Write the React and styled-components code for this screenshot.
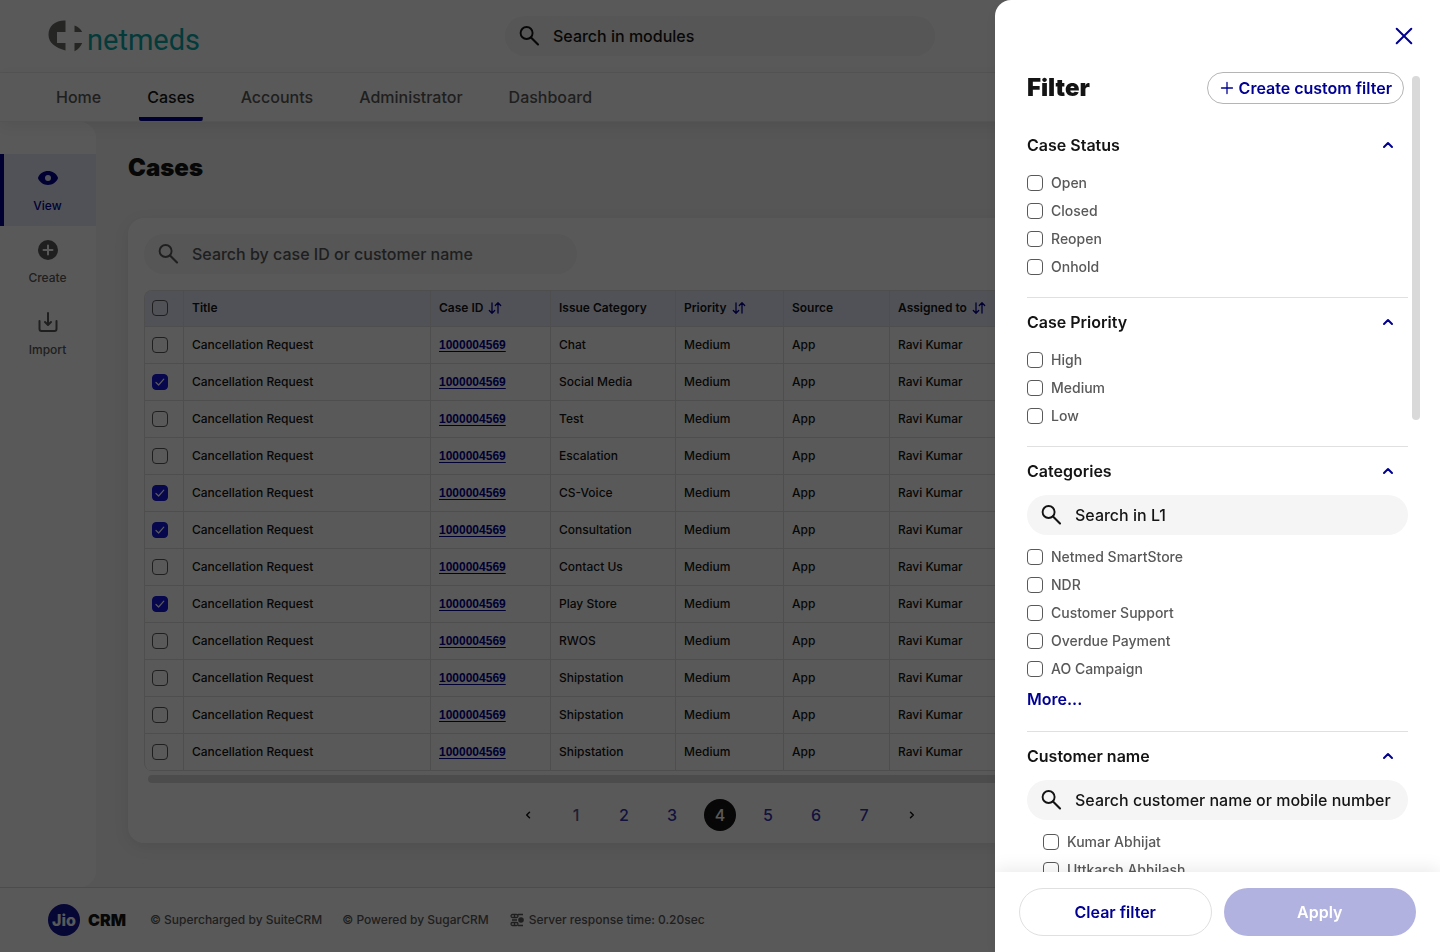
import React, { useState } from 'react';
import styled, { createGlobalStyle } from 'styled-components';

const GlobalStyle = createGlobalStyle`
  * {
    box-sizing: border-box;
  }

  body {
    margin: 0;
    font-family: 'Inter', 'Liberation Sans', sans-serif;
    font-weight: 500;
    color: #141414;
    background-color: #f5f5f5;
  }

  button,
  input {
    font: inherit;
    color: inherit;
  }

  button {
    padding: 0;
    border: none;
    background: none;
    cursor: pointer;
  }

  svg {
    display: block;
    flex: none;
  }
`;

/* ---------- page ---------- */

const Page = styled.div`
  min-height: 100vh;
  display: flex;
  flex-direction: column;
`;

const Header = styled.header`
  display: grid;
  grid-template-columns: 1fr minmax(0, 430px) 1fr;
  align-items: center;
  padding: 16px 48px;
  background-color: #ffffff;
  border-bottom: 1px solid #f0f0f0;
`;

const Brand = styled.a`
  display: flex;
  align-items: center;
  gap: 4px;
  color: #0ba8aa;
  text-decoration: none;
`;

const BrandName = styled.span`
  padding-top: 8px;
  font-family: 'Roboto', sans-serif;
  font-size: 29px;
  font-weight: 400;
  line-height: 32px;
`;

const SearchBox = styled.label`
  width: ${({ $width }) => $width || '100%'};
  max-width: 100%;
  height: 40px;
  display: flex;
  align-items: center;
  gap: 12px;
  padding: 0 12px;
  border-radius: 20px;
  background-color: #f5f5f5;
  color: ${({ $muted }) => ($muted ? '#595959' : '#141414')};

  input {
    flex: 1;
    min-width: 0;
    padding: 0;
    border: none;
    outline: none;
    background: none;
    font-size: 16px;
    line-height: 24px;
  }

  input::placeholder {
    color: inherit;
    opacity: 1;
  }
`;

const Nav = styled.nav`
  position: relative;
  display: flex;
  gap: 30px;
  padding: 0 48px;
  background-color: #ffffff;
  border-bottom: 1px solid #f0f0f0;
  box-shadow: 0 4px 16px rgba(0, 0, 0, 0.08);
`;

const NavItem = styled.a`
  padding: 12px 8px;
  font-size: 16px;
  line-height: 24px;
  color: #595959;
  text-decoration: none;

  &[aria-current] {
    color: #141414;
    background: linear-gradient(#000093, #000093) bottom / 100% 4px no-repeat;
    border-radius: 2px;
  }
`;

const Columns = styled.div`
  flex: 1;
  display: flex;
`;

const Sidebar = styled.aside`
  width: 96px;
  flex: none;
  padding-top: 32px;
  background-color: #ffffff;
  border-radius: 0 16px 16px 0;
`;

const SideItem = styled.a`
  display: flex;
  flex-direction: column;
  align-items: center;
  gap: 8px;
  padding: 12px 5px 12px 0;
  border-left: 4px solid ${({ $active }) => ($active ? '#000093' : 'transparent')};
  background-color: ${({ $active }) => ($active ? '#e8ebfa' : 'transparent')};
  color: ${({ $active }) => ($active ? '#000093' : '#595959')};
  font-size: 12px;
  line-height: 16px;
  text-decoration: none;
`;

const Main = styled.main`
  flex: 1;
  min-width: 0;
  display: flex;
  flex-direction: column;
  gap: 34px;
  padding: 30px 128px 44px 32px;
`;

const Title = styled.h1`
  margin: 0;
  font-size: 24px;
  line-height: 32px;
  font-weight: 900;
`;

const Card = styled.section`
  display: flex;
  flex-direction: column;
  padding: 16px 16px 12px;
  border-radius: 16px;
  background-color: #ffffff;
  box-shadow: 0 4px 16px rgba(0, 0, 0, 0.08);
`;

const Table = styled.table`
  width: 100%;
  margin-top: 16px;
  table-layout: fixed;
  border-collapse: separate;
  border-spacing: 0;
  border: 1px solid #e0e0e0;
  border-bottom: none;
  border-radius: 8px;
  font-size: 12px;
  line-height: 16px;
  overflow: hidden;

  th,
  td {
    height: 37px;
    padding: 0 8px;
    text-align: left;
    border-bottom: 1px solid #e0e0e0;
    border-right: 1px solid #e0e0e0;
    white-space: nowrap;
  }

  th {
    height: 36px;
    padding-bottom: 2px;
    font-weight: 600;
    background-color: #e8ebfa;
  }

  th:first-child,
  td:first-child {
    padding-left: 7px;
  }

  th:last-child,
  td:last-child {
    border-right: none;
  }

  td a {
    color: #000093;
    font-family: 'Liberation Sans', sans-serif;
    font-weight: 700;
    text-underline-offset: 2px;
  }
`;

const Col = styled.col`
  width: ${({ $width }) => $width};
`;

const SortLabel = styled.button`
  display: flex;
  align-items: center;
  gap: 4px;

  svg {
    color: #000093;
  }
`;

const Check = styled.input.attrs({ type: 'checkbox' })`
  appearance: none;
  display: block;
  flex: none;
  width: 16px;
  height: 16px;
  margin: 0;
  border: 1px solid #595959;
  border-radius: 4px;
  background-color: #ffffff;

  th & {
    background-color: transparent;
  }

  &:checked {
    border-color: #1414dc;
    background: #1414dc
      url("data:image/svg+xml,%3Csvg xmlns='http://www.w3.org/2000/svg' viewBox='0 0 14 14' fill='none' stroke='white' stroke-width='1.2' stroke-linecap='round' stroke-linejoin='round'%3E%3Cpath d='M3 7.5l2.600 2.500 5.200-5.800'/%3E%3C/svg%3E")
      center / 14px no-repeat;
  }
`;

const ScrollTrack = styled.div`
  height: 8px;
  margin: 4px 4px 0;
  border-radius: 4px;
  background-color: #dadada;
`;

const Pagination = styled.nav`
  display: flex;
  justify-content: center;
  gap: 16px;
  margin-top: 16px;
`;

const PageButton = styled.button`
  width: 32px;
  height: 32px;
  display: flex;
  align-items: center;
  justify-content: center;
  border-radius: 50%;
  font-size: 16px;
  color: ${({ $tone }) => $tone || '#3535b0'};

  &[aria-current] {
    color: #ffffff;
    background-color: #141414;
  }
`;

const Footer = styled.footer`
  display: flex;
  align-items: center;
  gap: 20px;
  padding: 16px 48px;
  border-top: 1px solid #d9d9d9;
  background-color: #ffffff;
  color: #595959;
  font-size: 12px;
  line-height: 16px;
`;

const FooterBrand = styled.div`
  display: flex;
  align-items: center;
  gap: 8px;
  margin-right: 4px;
  color: #141414;
  font-size: 16px;
  font-weight: 900;
`;

const JioBadge = styled.span`
  width: 32px;
  height: 32px;
  display: flex;
  align-items: center;
  justify-content: center;
  border-radius: 50%;
  background-color: #14149b;
  color: #ffffff;
  font-weight: 800;
`;

const FooterNote = styled.span`
  display: flex;
  align-items: center;
  gap: 4px;
`;

/* ---------- filter drawer ---------- */

const Overlay = styled.div`
  position: fixed;
  inset: 0;
  display: flex;
  justify-content: flex-end;
  background-color: rgba(0, 0, 0, 0.65);
`;

const Drawer = styled.aside`
  width: 445px;
  max-width: 100%;
  display: flex;
  flex-direction: column;
  overflow: hidden;
  border-radius: 16px 0 0 0;
  background-color: #ffffff;
  box-shadow: 0 4px 16px rgba(0, 0, 0, 0.08);
`;

const DrawerTop = styled.div`
  display: flex;
  justify-content: flex-end;
  padding: 24px;
  color: #000093;
`;

const DrawerBody = styled.div`
  flex: 1;
  min-height: 0;
  display: flex;
  gap: 4px;
  padding: 0 20px 0 32px;
`;

const DrawerContent = styled.div`
  flex: 1;
  min-width: 0;
  overflow-y: auto;
  scrollbar-width: none;
`;

const ScrollThumb = styled.div`
  width: 8px;
  height: 43%;
  margin-top: 4px;
  border-radius: 4px;
  background-color: #d9d9d9;
`;

const DrawerHeading = styled.div`
  display: flex;
  align-items: center;
  justify-content: space-between;
  padding-right: 4px;
  margin-bottom: 16px;

  h2 {
    margin: 0;
    font-size: 24px;
    line-height: 32px;
    font-weight: 900;
  }
`;

const CustomButton = styled.button`
  height: 32px;
  display: flex;
  align-items: center;
  gap: 4px;
  padding: 0 11px;
  border: 1px solid #b5b5b5;
  border-radius: 16px;
  color: #000093;
  font-size: 16px;
  font-weight: 600;
`;

const Section = styled.section`
  display: flex;
  flex-direction: column;
  gap: 12px;
  padding: 12px 0 20px;
  border-top: 1px solid #e0e0e0;

  &:first-of-type {
    border-top-color: transparent;
  }
`;

const SectionTitle = styled.button`
  display: flex;
  align-items: center;
  justify-content: space-between;
  padding-right: 8px;
  font-size: 16px;
  line-height: 24px;
  font-weight: 600;

  svg {
    color: #000093;
  }
`;

const Options = styled.div`
  display: flex;
  flex-direction: column;
  gap: 8px;
  padding-top: ${({ $spaced }) => ($spaced ? '4px' : '0')};
  padding-left: ${({ $indent }) => ($indent ? '16px' : '0')};
`;

const Option = styled.label`
  display: flex;
  align-items: center;
  gap: 8px;
  color: #595959;
  font-size: 14px;
  line-height: 20px;
`;

const MoreLink = styled.a`
  color: #000093;
  font-size: 16px;
  line-height: 24px;
  font-weight: 600;
  text-decoration: none;
`;

const DrawerFooter = styled.div`
  position: relative;
  display: flex;
  gap: 12px;
  padding: 16px 24px;
  background-color: #ffffff;
  box-shadow: 0 -4px 16px rgba(0, 0, 0, 0.08);
`;

const ActionButton = styled.button`
  flex: 1;
  height: 48px;
  border: 1px solid ${({ $primary }) => ($primary ? 'transparent' : '#e0e0e0')};
  border-radius: 24px;
  background: ${({ $primary }) => ($primary ? '#b2b2e0' : '#ffffff')} border-box;
  color: ${({ $primary }) => ($primary ? '#ffffff' : '#000093')};
  font-size: 16px;
  font-weight: 600;
`;

/* ---------- icons ---------- */

const SearchIcon = () => (
  <svg width='24' height='24' viewBox='0 0 24 24' fill='none' stroke='currentColor' strokeWidth='1.9'>
    <circle cx='9.6' cy='9' r='6' />
    <path d='M14 13.400l7 7' strokeWidth='2.1' strokeLinecap='round' />
  </svg>
);

const SortIcon = () => (
  <svg width='16' height='16' viewBox='0 0 16 16' fill='none' stroke='currentColor' strokeWidth='1.3' strokeLinecap='round' strokeLinejoin='round'>
    <path d='M5 3v10M2.300 10.500l2.700 2.700 2.700-2.700M11 13V3M8.300 5.500L11 2.800l2.700 2.700' />
  </svg>
);

const ChevronUp = () => (
  <svg width='24' height='24' viewBox='0 0 24 24' fill='none' stroke='currentColor' strokeWidth='2' strokeLinecap='round' strokeLinejoin='round'>
    <path d='M8 14l4-4 4 4' />
  </svg>
);

const PageArrow = ({ next }) => (
  <svg width='16' height='16' viewBox='0 0 16 16' fill='none' stroke='currentColor' strokeWidth='1.5' strokeLinecap='round' strokeLinejoin='round'>
    <path d={next ? 'M6.500 5.200L9.300 8l-2.800 2.800' : 'M9.500 5.200L6.700 8l2.800 2.800'} />
  </svg>
);

const CloseIcon = () => (
  <svg width='24' height='24' viewBox='0 0 24 24' fill='none' stroke='currentColor' strokeWidth='2' strokeLinecap='round'>
    <path d='M4.700 4.700l14.600 14.600M19.300 4.700L4.700 19.300' />
  </svg>
);

const PlusIcon = () => (
  <svg width='16' height='16' viewBox='0 0 16 16' fill='none' stroke='currentColor' strokeWidth='1.3' strokeLinecap='round'>
    <path d='M8 2.500v11M2.500 8h11' />
  </svg>
);

const EyeIcon = () => (
  <svg width='24' height='24' viewBox='0 0 24 24' fill='currentColor'>
    <path
      fillRule='evenodd'
      d='M12 5c-4.600 0-8 2.600-9.700 5.900a2.300 2.300 0 0 0 0 2.200C4 16.400 7.400 19 12 19s8-2.600 9.700-5.900a2.300 2.300 0 0 0 0-2.200C20 7.600 16.600 5 12 5zm0 10a3 3 0 1 1 0-6 3 3 0 0 1 0 6z'
    />
  </svg>
);

const CreateIcon = () => (
  <svg width='24' height='24' viewBox='0 0 24 24'>
    <circle cx='12' cy='12' r='10' fill='currentColor' />
    <path d='M12 7.500v9M7.500 12h9' stroke='#ffffff' strokeWidth='2' strokeLinecap='round' />
  </svg>
);

const ImportIcon = () => (
  <svg width='24' height='24' viewBox='0 0 24 24' fill='none' stroke='currentColor' strokeWidth='2' strokeLinecap='round' strokeLinejoin='round'>
    <path d='M12 3v11M9 12l3 3 3-3M3.500 11v8a2 2 0 0 0 2 2h13a2 2 0 0 0 2-2v-8' />
  </svg>
);

const ServerIcon = () => (
  <svg width='16' height='16' viewBox='0 0 16 16' fill='none' stroke='currentColor' strokeWidth='1.3'>
    <rect x='2' y='2.500' width='7' height='3' rx='1.5' />
    <rect x='2' y='10.500' width='7' height='3' rx='1.5' />
    <path d='M5.500 2.500v3M5.500 10.500v3M9 2.500h5M9 13.500h5M3 8h5' />
    <circle cx='12' cy='8' r='2.8' fill='currentColor' stroke='none' />
  </svg>
);

const NetmedsMark = () => (
  <svg width='35' height='32' viewBox='0 0 35 32' fill='#6b6b66'>
    <path d='M17.500 0.500v11.500H9v11h8.500v7.500C7 27.500 0.500 23 0.500 14.500 0.500 5.500 8 0 17.500 0.500z' />
    <path d='M26.500 5.500c3.500 1 6 3.500 7.700 6.500h-7.700z' />
    <path d='M26.500 23h7.700c-1.500 3.500-4 6.500-7.700 8.300z' />
  </svg>
);

/* ---------- data ---------- */

const navItems = ['Home', 'Cases', 'Accounts', 'Administrator', 'Dashboard'];

const sideItems = [
  { label: 'View', Icon: EyeIcon },
  { label: 'Create', Icon: CreateIcon },
  { label: 'Import', Icon: ImportIcon }
];

const columns = [
  { label: 'Title', width: '247px' },
  { label: 'Case ID', width: '120px', sort: true },
  { label: 'Issue Category', width: '125px' },
  { label: 'Priority', width: '108px', sort: true },
  { label: 'Source', width: '106px' },
  { label: 'Assigned to', width: 'auto', sort: true }
];

const issues = [
  'Chat',
  'Social Media',
  'Test',
  'Escalation',
  'CS-Voice',
  'Consultation',
  'Contact Us',
  'Play Store',
  'RWOS',
  'Shipstation',
  'Shipstation',
  'Shipstation'
];

const filters = [
  { title: 'Case Status', options: ['Open', 'Closed', 'Reopen', 'Onhold'] },
  { title: 'Case Priority', options: ['High', 'Medium', 'Low'] },
  {
    title: 'Categories',
    search: 'Search in L1',
    options: ['Netmed SmartStore', 'NDR', 'Customer Support', 'Overdue Payment', 'AO Campaign'],
    more: true
  },
  {
    title: 'Customer name',
    search: 'Search customer name or mobile number',
    options: ['Kumar Abhijat', 'Uttkarsh Abhilash'],
    indent: true
  }
];

const Search = ({ placeholder, width, muted }) => (
  <SearchBox $width={width} $muted={muted}>
    <SearchIcon />
    <input type='text' placeholder={placeholder} aria-label={placeholder} />
  </SearchBox>
);

const CasesTable = () => {
  const [selected, setSelected] = useState([1, 4, 5, 7]);

  const toggle = (row) => {
    setSelected(selected.includes(row) ? selected.filter((el) => el !== row) : [...selected, row]);
  };

  return (
    <Table>
      <colgroup>
        <Col $width='39px' />
        {columns.map((col) => (
          <Col key={col.label} $width={col.width} />
        ))}
      </colgroup>
      <thead>
        <tr>
          <th>
            <Check aria-label='Select all cases' />
          </th>
          {columns.map((col) => (
            <th key={col.label}>
              {col.sort ? (
                <SortLabel>
                  {col.label}
                  <SortIcon />
                </SortLabel>
              ) : (
                col.label
              )}
            </th>
          ))}
        </tr>
      </thead>
      <tbody>
        {issues.map((issue, row) => (
          <tr key={row}>
            <td>
              <Check
                aria-label={`Select case ${row + 1}`}
                checked={selected.includes(row)}
                onChange={() => toggle(row)}
              />
            </td>
            <td>Cancellation Request</td>
            <td>
              <a href='#case'>1000004569</a>
            </td>
            <td>{issue}</td>
            <td>Medium</td>
            <td>App</td>
            <td>Ravi Kumar</td>
          </tr>
        ))}
      </tbody>
    </Table>
  );
};

const FilterSection = ({ filter }) => {
  const [open, setOpen] = useState(true);

  return (
    <Section>
      <SectionTitle aria-expanded={open} onClick={() => setOpen(!open)}>
        {filter.title}
        <ChevronUp />
      </SectionTitle>
      {open && (
        <>
          {filter.search && <Search placeholder={filter.search} />}
          <Options $spaced={!filter.search} $indent={filter.indent}>
            {filter.options.map((option) => (
              <Option key={option}>
                <Check />
                {option}
              </Option>
            ))}
            {filter.more && <MoreLink href='#more'>More...</MoreLink>}
          </Options>
        </>
      )}
    </Section>
  );
};

const FilterDrawer = ({ onClose }) => (
  <Overlay>
    <Drawer role='dialog' aria-label='Filter'>
      <DrawerTop>
        <button aria-label='Close' onClick={onClose}>
          <CloseIcon />
        </button>
      </DrawerTop>
      <DrawerBody>
        <DrawerContent>
          <DrawerHeading>
            <h2>Filter</h2>
            <CustomButton>
              <PlusIcon />
              Create custom filter
            </CustomButton>
          </DrawerHeading>
          {filters.map((filter) => (
            <FilterSection key={filter.title} filter={filter} />
          ))}
        </DrawerContent>
        <ScrollThumb />
      </DrawerBody>
      <DrawerFooter>
        <ActionButton>Clear filter</ActionButton>
        <ActionButton $primary>Apply</ActionButton>
      </DrawerFooter>
    </Drawer>
  </Overlay>
);

const App = () => {
  const [showFilter, setShowFilter] = useState(true);

  return (
    <>
      <GlobalStyle />
      <Page>
        <Header>
          <Brand href='#home'>
            <NetmedsMark />
            <BrandName>netmeds</BrandName>
          </Brand>
          <Search placeholder='Search in modules' />
        </Header>
        <Nav>
          {navItems.map((item) => (
            <NavItem key={item} href='#nav' aria-current={item === 'Cases' ? 'page' : undefined}>
              {item}
            </NavItem>
          ))}
        </Nav>
        <Columns>
          <Sidebar>
            {sideItems.map(({ label, Icon }) => (
              <SideItem key={label} href='#side' $active={label === 'View'}>
                <Icon />
                {label}
              </SideItem>
            ))}
          </Sidebar>
          <Main>
            <Title>Cases</Title>
            <Card>
              <Search placeholder='Search by case ID or customer name' width='433px' muted />
              <CasesTable />
              <ScrollTrack />
              <Pagination aria-label='Pages'>
                <PageButton aria-label='Previous page' $tone='#141414'>
                  <PageArrow />
                </PageButton>
                {[1, 2, 3, 4, 5, 6, 7].map((page) => (
                  <PageButton
                    key={page}
                    $tone={page === 1 ? '#595980' : undefined}
                    aria-current={page === 4 ? 'page' : undefined}
                  >
                    {page}
                  </PageButton>
                ))}
                <PageButton aria-label='Next page' $tone='#141414'>
                  <PageArrow next />
                </PageButton>
              </Pagination>
            </Card>
          </Main>
        </Columns>
        <Footer>
          <FooterBrand>
            <JioBadge>Jio</JioBadge>
            CRM
          </FooterBrand>
          <span>© Supercharged by SuiteCRM</span>
          <span>© Powered by SugarCRM</span>
          <FooterNote>
            <ServerIcon />
            Server response time: 0.20sec
          </FooterNote>
        </Footer>
      </Page>
      {showFilter && <FilterDrawer onClose={() => setShowFilter(false)} />}
    </>
  );
};

export default App;
